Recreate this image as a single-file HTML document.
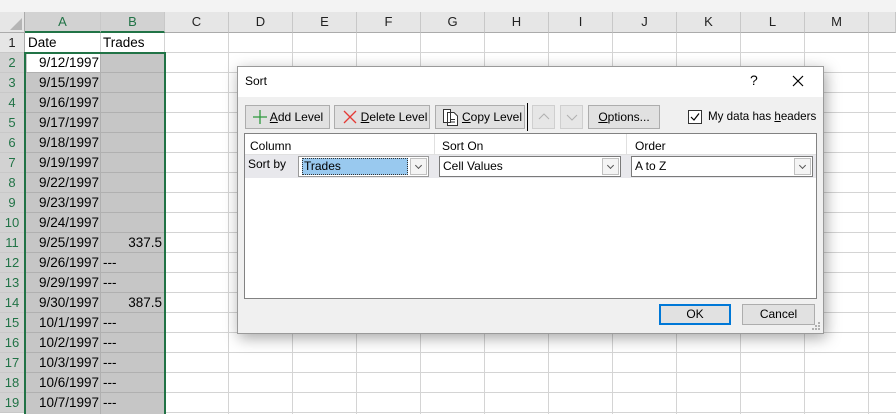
<!DOCTYPE html>
<html><head><style>
*{box-sizing:border-box;margin:0;padding:0}
body{width:896px;height:414px;overflow:hidden;background:#fff;font-family:"Liberation Sans",sans-serif;font-size:13px;color:#000;position:relative}
.a{position:absolute}
.ch{position:absolute;top:12px;height:21px;background:#e6e6e6;border-right:1px solid #c8c8c8;border-bottom:1px solid #ababab;text-align:center;line-height:20px;font-size:13px;color:#222}
.rh{position:absolute;left:0;width:25px;height:20px;background:#e6e6e6;border-bottom:1px solid #c8c8c8;border-right:1px solid #ababab;text-align:center;line-height:20px;font-size:13px;color:#222}
.sel{background:#d2d2d2;color:#217346}
.c{position:absolute;height:20px;line-height:20px;font-size:13.5px;white-space:nowrap}
.btn{position:absolute;top:105px;height:24px;background:#e1e1e1;border:1px solid #adadad;font-size:12px;line-height:22px;text-align:center}
u{text-decoration:underline}
.dd{position:absolute;height:21px;background:#fff;border:1px solid #7a7a7a;font-size:12px;line-height:19px;padding-left:3px}
.arr{position:absolute;right:1px;top:1px;width:17px;height:17px;border:1px solid #c0c0c0;background:#f4f4f4}
.arr:after{content:"";position:absolute;left:5px;top:4px;width:4px;height:4px;border-right:1px solid #555;border-bottom:1px solid #555;transform:rotate(45deg)}
</style></head><body>
<div class="a" style="left:0;top:0;width:896px;height:12px;background:#f3f3f3"></div>
<div class="a" style="left:0;top:12px;width:25px;height:21px;background:#e6e6e6;border-right:1px solid #ababab;border-bottom:1px solid #ababab"></div>
<svg class="a" style="left:10px;top:18px" width="12" height="12"><polygon points="12,0 12,12 0,12" fill="#b5b5b5"/></svg>
<svg class="a" style="left:0;top:0" width="896" height="414">
<g stroke="#d4d4d4" stroke-width="1">
<line x1="164.5" y1="33" x2="164.5" y2="414"/><line x1="228.5" y1="33" x2="228.5" y2="414"/><line x1="292.5" y1="33" x2="292.5" y2="414"/><line x1="356.5" y1="33" x2="356.5" y2="414"/><line x1="420.5" y1="33" x2="420.5" y2="414"/><line x1="484.5" y1="33" x2="484.5" y2="414"/><line x1="548.5" y1="33" x2="548.5" y2="414"/><line x1="612.5" y1="33" x2="612.5" y2="414"/><line x1="676.5" y1="33" x2="676.5" y2="414"/><line x1="740.5" y1="33" x2="740.5" y2="414"/><line x1="804.5" y1="33" x2="804.5" y2="414"/><line x1="868.5" y1="33" x2="868.5" y2="414"/>
<line x1="25" y1="52.5" x2="896" y2="52.5"/><line x1="25" y1="72.5" x2="896" y2="72.5"/><line x1="25" y1="92.5" x2="896" y2="92.5"/><line x1="25" y1="112.5" x2="896" y2="112.5"/><line x1="25" y1="132.5" x2="896" y2="132.5"/><line x1="25" y1="152.5" x2="896" y2="152.5"/><line x1="25" y1="172.5" x2="896" y2="172.5"/><line x1="25" y1="192.5" x2="896" y2="192.5"/><line x1="25" y1="212.5" x2="896" y2="212.5"/><line x1="25" y1="232.5" x2="896" y2="232.5"/><line x1="25" y1="252.5" x2="896" y2="252.5"/><line x1="25" y1="272.5" x2="896" y2="272.5"/><line x1="25" y1="292.5" x2="896" y2="292.5"/><line x1="25" y1="312.5" x2="896" y2="312.5"/><line x1="25" y1="332.5" x2="896" y2="332.5"/><line x1="25" y1="352.5" x2="896" y2="352.5"/><line x1="25" y1="372.5" x2="896" y2="372.5"/><line x1="25" y1="392.5" x2="896" y2="392.5"/><line x1="25" y1="412.5" x2="896" y2="412.5"/>
<line x1="100.5" y1="33" x2="100.5" y2="53"/>
</g></svg>
<div class="a" style="left:25px;top:53px;width:140px;height:361px;background:#c6c6c6"></div>
<svg class="a" style="left:25px;top:53px" width="140" height="361"><g stroke="#b0b0b0"><line x1="75.5" y1="0" x2="75.5" y2="361"/>
<line x1="0" y1="19.5" x2="140" y2="19.5"/><line x1="0" y1="39.5" x2="140" y2="39.5"/><line x1="0" y1="59.5" x2="140" y2="59.5"/><line x1="0" y1="79.5" x2="140" y2="79.5"/><line x1="0" y1="99.5" x2="140" y2="99.5"/><line x1="0" y1="119.5" x2="140" y2="119.5"/><line x1="0" y1="139.5" x2="140" y2="139.5"/><line x1="0" y1="159.5" x2="140" y2="159.5"/><line x1="0" y1="179.5" x2="140" y2="179.5"/><line x1="0" y1="199.5" x2="140" y2="199.5"/><line x1="0" y1="219.5" x2="140" y2="219.5"/><line x1="0" y1="239.5" x2="140" y2="239.5"/><line x1="0" y1="259.5" x2="140" y2="259.5"/><line x1="0" y1="279.5" x2="140" y2="279.5"/><line x1="0" y1="299.5" x2="140" y2="299.5"/><line x1="0" y1="319.5" x2="140" y2="319.5"/><line x1="0" y1="339.5" x2="140" y2="339.5"/></g></svg>
<div class="a" style="left:27px;top:54px;width:73px;height:18px;background:#fff"></div>
<div class="ch sel" style="left:25px;width:76px;border-bottom:2px solid #217346">A</div>
<div class="ch sel" style="left:101px;width:64px;border-bottom:2px solid #217346">B</div>
<div class="ch" style="left:165px;width:64px">C</div><div class="ch" style="left:229px;width:64px">D</div><div class="ch" style="left:293px;width:64px">E</div><div class="ch" style="left:357px;width:64px">F</div><div class="ch" style="left:421px;width:64px">G</div><div class="ch" style="left:485px;width:64px">H</div><div class="ch" style="left:549px;width:64px">I</div><div class="ch" style="left:613px;width:64px">J</div><div class="ch" style="left:677px;width:64px">K</div><div class="ch" style="left:741px;width:64px">L</div><div class="ch" style="left:805px;width:64px">M</div><div class="ch" style="left:869px;width:27px"></div>
<div class="rh" style="top:33px">1</div>
<div class="rh sel" style="top:53px">2</div><div class="rh sel" style="top:73px">3</div><div class="rh sel" style="top:93px">4</div><div class="rh sel" style="top:113px">5</div><div class="rh sel" style="top:133px">6</div><div class="rh sel" style="top:153px">7</div><div class="rh sel" style="top:173px">8</div><div class="rh sel" style="top:193px">9</div><div class="rh sel" style="top:213px">10</div><div class="rh sel" style="top:233px">11</div><div class="rh sel" style="top:253px">12</div><div class="rh sel" style="top:273px">13</div><div class="rh sel" style="top:293px">14</div><div class="rh sel" style="top:313px">15</div><div class="rh sel" style="top:333px">16</div><div class="rh sel" style="top:353px">17</div><div class="rh sel" style="top:373px">18</div><div class="rh sel" style="top:393px">19</div>
<div class="a" style="left:24px;top:52px;width:142px;height:362px;border:2px solid #217346;border-bottom:none"></div>
<div class="c" style="left:28px;top:33px">Date</div><div class="c" style="left:103px;top:33px">Trades</div>
<div class="c" style="left:27px;width:72px;text-align:right;top:53px">9/12/1997</div>
<div class="c" style="left:27px;width:72px;text-align:right;top:73px">9/15/1997</div>
<div class="c" style="left:27px;width:72px;text-align:right;top:93px">9/16/1997</div>
<div class="c" style="left:27px;width:72px;text-align:right;top:113px">9/17/1997</div>
<div class="c" style="left:27px;width:72px;text-align:right;top:133px">9/18/1997</div>
<div class="c" style="left:27px;width:72px;text-align:right;top:153px">9/19/1997</div>
<div class="c" style="left:27px;width:72px;text-align:right;top:173px">9/22/1997</div>
<div class="c" style="left:27px;width:72px;text-align:right;top:193px">9/23/1997</div>
<div class="c" style="left:27px;width:72px;text-align:right;top:213px">9/24/1997</div>
<div class="c" style="left:27px;width:72px;text-align:right;top:233px">9/25/1997</div>
<div class="c" style="left:27px;width:72px;text-align:right;top:253px">9/26/1997</div>
<div class="c" style="left:27px;width:72px;text-align:right;top:273px">9/29/1997</div>
<div class="c" style="left:27px;width:72px;text-align:right;top:293px">9/30/1997</div>
<div class="c" style="left:27px;width:72px;text-align:right;top:313px">10/1/1997</div>
<div class="c" style="left:27px;width:72px;text-align:right;top:333px">10/2/1997</div>
<div class="c" style="left:27px;width:72px;text-align:right;top:353px">10/3/1997</div>
<div class="c" style="left:27px;width:72px;text-align:right;top:373px">10/6/1997</div>
<div class="c" style="left:27px;width:72px;text-align:right;top:393px">10/7/1997</div>
<div class="c" style="left:101px;width:61px;text-align:right;top:233px">337.5</div>
<div class="c" style="left:101px;width:61px;text-align:right;top:293px">387.5</div>
<div class="c" style="left:103px;top:253px">---</div><div class="c" style="left:103px;top:273px">---</div><div class="c" style="left:103px;top:313px">---</div><div class="c" style="left:103px;top:333px">---</div><div class="c" style="left:103px;top:353px">---</div><div class="c" style="left:103px;top:373px">---</div><div class="c" style="left:103px;top:393px">---</div>
<div class="a" style="left:237px;top:66px;width:587px;height:268px;background:#f0f0f0;border:1px solid #9a9a9a;box-shadow:2px 4px 14px rgba(0,0,0,0.35)"></div>
<div class="a" style="left:238px;top:67px;width:585px;height:30px;background:#fff"></div>
<div class="a" style="left:245px;top:74px;font-size:12px">Sort</div>
<div class="a" style="left:750px;top:72px;font-size:14px">?</div>
<svg class="a" style="left:792px;top:75px" width="12" height="12"><path d="M1 1L11 11M11 1L1 11" stroke="#000" stroke-width="1.2"/></svg>
<div class="btn" style="left:245px;width:85px;padding-left:18px"><u>A</u>dd Level</div>
<svg class="a" style="left:252px;top:109px" width="16" height="16"><path d="M8 1V15M1 8H15" stroke="#2e9a3e" stroke-width="1.3"/></svg>
<div class="btn" style="left:334px;width:96px;padding-left:24px"><u>D</u>elete Level</div>
<svg class="a" style="left:343px;top:110px" width="14" height="14"><path d="M1 1L13 13M13 1L1 13" stroke="#e53935" stroke-width="1.3"/></svg>
<div class="btn" style="left:435px;width:90px;padding-left:24px"><u>C</u>opy Level</div>
<svg class="a" style="left:442px;top:108px" width="18" height="18"><path d="M1.5 1.5H8.5V14.5H1.5Z M5.5 4.5H12L15.5 8V17.5H5.5Z M8 11.5H13M8 14H13" fill="#fff" stroke="#333" stroke-width="1"/></svg>
<div class="a" style="left:527px;top:103px;width:1px;height:28px;background:#000"></div>
<div class="btn" style="left:532px;width:23px;background:#e6e6e6;border-color:#cfcfcf"></div>
<svg class="a" style="left:538px;top:113px" width="12" height="8"><path d="M1 6L6 1L11 6" stroke="#b0b0b0" fill="none"/></svg>
<div class="btn" style="left:560px;width:23px;background:#e6e6e6;border-color:#cfcfcf"></div>
<svg class="a" style="left:566px;top:114px" width="12" height="8"><path d="M1 1L6 6L11 1" stroke="#b0b0b0" fill="none"/></svg>
<div class="btn" style="left:588px;width:72px"><u>O</u>ptions...</div>
<div class="a" style="left:688px;top:110px;width:14px;height:14px;border:1px solid #333;background:#fff"></div>
<svg class="a" style="left:689px;top:111px" width="12" height="12"><path d="M2 6L5 9L10 2.5" stroke="#000" fill="none" stroke-width="1.2"/></svg>
<div class="a" style="left:708px;top:110px;font-size:11.6px">My data has <u>h</u>eaders</div>
<div class="a" style="left:244px;top:133px;width:573px;height:166px;background:#fff;border:1px solid #828282"></div>
<div class="a" style="left:245px;top:134px;width:571px;height:21px;border-bottom:1px solid #e0e0e0"></div>
<div class="a" style="left:434px;top:134px;width:1px;height:21px;background:#e0e0e0"></div>
<div class="a" style="left:626px;top:134px;width:1px;height:21px;background:#e0e0e0"></div>
<div class="a" style="left:250px;top:139px;font-size:12px">Column</div>
<div class="a" style="left:442px;top:139px;font-size:12px">Sort On</div>
<div class="a" style="left:635px;top:139px;font-size:12px">Order</div>
<div class="a" style="left:245px;top:155px;width:571px;height:23px;background:#e8e8ec"></div>
<div class="a" style="left:248px;top:157px;font-size:12px">Sort by</div>
<div class="dd" style="left:298px;top:156px;width:131px;border-color:#999"><span style="background:#99c9ef;border:1px dotted #333;display:inline-block;width:106px;height:17px;line-height:15px;padding-left:1px">Trades</span><div class="arr"></div></div>
<div class="dd" style="left:439px;top:156px;width:182px">Cell Values<div class="arr"></div></div>
<div class="dd" style="left:631px;top:156px;width:182px">A to Z<div class="arr"></div></div>
<div class="btn" style="left:659px;top:304px;width:72px;height:21px;line-height:17px;border:2px solid #0078d7">OK</div>
<div class="btn" style="left:742px;top:304px;width:73px;height:21px;line-height:19px">Cancel</div>
<svg class="a" style="left:812px;top:322px" width="10" height="10" fill="#b0b0b0"><rect x="6" y="0" width="2" height="2"/><rect x="3" y="3" width="2" height="2"/><rect x="6" y="3" width="2" height="2"/><rect x="0" y="6" width="2" height="2"/><rect x="3" y="6" width="2" height="2"/><rect x="6" y="6" width="2" height="2"/></svg>
</body></html>
